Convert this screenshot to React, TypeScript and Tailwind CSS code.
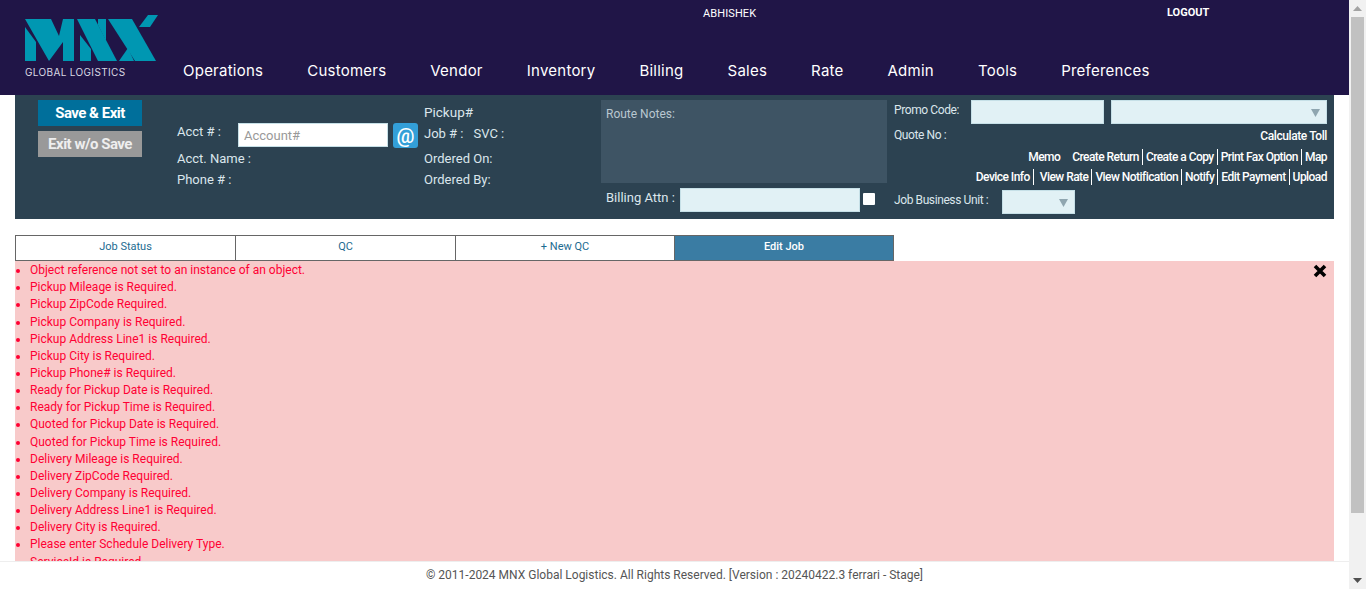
const navItems = ["Operations", "Customers", "Vendor", "Inventory", "Billing", "Sales", "Rate", "Admin", "Tools", "Preferences"]

const errors = [
  "Object reference not set to an instance of an object.",
  "Pickup Mileage is Required.",
  "Pickup ZipCode Required.",
  "Pickup Company is Required.",
  "Pickup Address Line1 is Required.",
  "Pickup City is Required.",
  "Pickup Phone# is Required.",
  "Ready for Pickup Date is Required.",
  "Ready for Pickup Time is Required.",
  "Quoted for Pickup Date is Required.",
  "Quoted for Pickup Time is Required.",
  "Delivery Mileage is Required.",
  "Delivery ZipCode Required.",
  "Delivery Company is Required.",
  "Delivery Address Line1 is Required.",
  "Delivery City is Required.",
  "Please enter Schedule Delivery Type.",
  "ServiceId is Required.",
]

const linksOne = ["Create Return", "Create a Copy", "Print Fax Option", "Map"]
const linksTwo = ["Device Info", "View Rate", "View Notification", "Notify", "Edit Payment", "Upload"]

function Logo() {
  return (
    <svg width="134" height="47" viewBox="0 0 134 47" className="block">
      {/* M */}
      <path fill="#0097b2" d="M0 4h26l8 17 4-17h11v42H38V27L24 46 0 4Z" />
      <path fill="#0097b2" d="M0 12l11 15v19H0V12Z" />
      {/* N */}
      <path fill="#0097b2" d="M55 20l11 14v12H55V20Z" />
      <path fill="#0097b2" d="M52 4h18l22 42H73L52 4Z" />
      <path fill="#0097b2" d="M73 4h8v22L73 10V4Z" />
      {/* X */}
      <path fill="#0097b2" d="M83 4h24l24 42h-21L83 4Z" />
      <path fill="#0097b2" d="M94 46l9-13 6 13H94Z" />
      <path fill="#0097b2" d="M114 12l9-12h10l-8 12h-11Z" />
    </svg>
  )
}

function SelectBox({ className }: { className: string }) {
  return (
    <div className={`flex items-center justify-end bg-[#e1f1f5] border border-[#c6e0e7] pr-[6px] ${className}`}>
      <svg width="9" height="9" viewBox="0 0 9 9">
        <path d="M0 1h9L4.5 9Z" fill="#8fa6b0" />
      </svg>
    </div>
  )
}

function LinkRow({ items }: { items: string[] }) {
  return (
    <>
      {items.map((item, i) => (
        <span key={item} className={i < items.length - 1 ? "border-r border-white pr-[3px] mr-[3px]" : ""}>
          {item}
        </span>
      ))}
    </>
  )
}

export default function App() {
  return (
    <div className="relative flex h-[589px] w-[1366px] overflow-hidden bg-white font-['Roboto',sans-serif]">
      <div className="w-[1349px] shrink-0">
        {/* Top bar */}
        <header className="flex h-[95px] bg-[#201547]">
          <div className="ml-[25px] w-[158px] pt-[15px]">
            <Logo />
            <div className="mt-[4px] text-[10px] leading-[12px] tracking-[0.35px] text-[#d9d8e2] font-['Inter',sans-serif]">GLOBAL LOGISTICS</div>
          </div>
          <div className="flex-1">
            <div className="flex h-[61px] pt-[6px] text-[11px] leading-[14px] text-white">
              <span className="ml-[520px] w-[464px] mt-[1px] tracking-[0.1px]">ABHISHEK</span>
              <span className="font-bold">LOGOUT</span>
            </div>
            <nav className="flex gap-[44px] text-[15px] leading-[20px] tracking-[0.24px] text-white font-['Inter',sans-serif]">
              {navItems.map((item) => (
                <span key={item}>{item}</span>
              ))}
            </nav>
          </div>
        </header>

        <main className="px-[15px]">
          {/* Job panel */}
          <section className="flex h-[124px] bg-[#2c4251] pl-[23px] pt-[5px] text-[#dbe6ec]">
            <div className="w-[139px] shrink-0">
              <button className="block h-[26px] w-[104px] bg-[#006f9b] text-[15px] font-bold tracking-[-0.5px] text-white">Save &amp; Exit</button>
              <button className="mt-[5px] block h-[26px] w-[104px] bg-[#999999] text-[15px] font-bold tracking-[-0.5px] text-[#eeeeee]">Exit w/o Save</button>
            </div>

            <div className="w-[247px] shrink-0 pt-[23px] text-[13px] leading-[20px]">
              <div className="flex">
                <span className="w-[61px] -mt-[1px]">Acct # :</span>
                <input placeholder="Account#" className="h-[24px] w-[150px] border border-[#c6e0e7] bg-white px-[5px] text-[13px] text-gray-700 placeholder:text-[#999] outline-none" />
                <span className="ml-[5px] flex h-[25px] w-[25px] items-center justify-center rounded-[3px] bg-[#339fd8] text-[20px] font-medium text-white">@</span>
              </div>
              <div className="mt-[1px]">Acct. Name :</div>
              <div className="mt-[1px]">Phone # :</div>
            </div>

            <div className="w-[177px] shrink-0 pt-[2px] text-[13px] leading-[20px]">
              <div className="text-[13.5px]">Pickup#</div>
              <div className="mt-[2px] flex gap-[10px]">
                <span>Job # :</span>
                <span>SVC :</span>
              </div>
              <div className="mt-[5px]">Ordered On:</div>
              <div className="mt-[1px]">Ordered By:</div>
            </div>

            <div className="w-[293px] shrink-0">
              <div className="h-[83px] w-[286px] bg-[#3e5464] px-[5px] pt-[6px] text-[12px] leading-[16px] text-[#b9c7d0]">Route Notes:</div>
              <div className="mt-[5px] flex items-center pl-[5px] text-[13px]">
                <span className="w-[74px] whitespace-nowrap -mt-[4px]">Billing Attn :</span>
                <div className="h-[24px] w-[180px] border border-[#c6e0e7] bg-[#e1f1f5]"></div>
                <input type="checkbox" className="ml-[3px] -mt-[2px] h-[12px] w-[12px] appearance-none rounded-[1px] bg-white" />
              </div>
            </div>

            <div className="w-[433px] shrink-0 text-[12px] tracking-[-0.4px] leading-[16px]">
              <div className="flex h-[24px] items-center">
                <span className="w-[77px] -mt-[4px]">Promo Code:</span>
                <div className="h-[24px] w-[133px] border border-[#c6e0e7] bg-[#e1f1f5]"></div>
                <SelectBox className="ml-[7px] h-[24px] w-[216px]" />
              </div>
              <div className="mt-[2px] flex h-[20px] items-start justify-between">
                <span className="mt-[1px]">Quote No :</span>
                <span className="mt-[2px] font-medium text-white">Calculate Toll</span>
              </div>
              <div className="mt-[3px] flex h-[16px] justify-end font-medium tracking-[-0.55px] text-white">
                <span className="mr-[12px]">Memo</span>
                <LinkRow items={linksOne} />
              </div>
              <div className="mt-[4px] flex h-[16px] justify-end font-medium tracking-[-0.55px] text-white">
                <span className="border-r border-white pr-[3px] mr-[6px]">{linksTwo[0]}</span>
                <LinkRow items={linksTwo.slice(1)} />
              </div>
              <div className="mt-[5px] flex h-[24px] items-center">
                <span className="w-[108px] -mt-[4px]">Job Business Unit :</span>
                <SelectBox className="h-[24px] w-[73px]" />
              </div>
            </div>
          </section>

          {/* Tabs */}
          <div className="mt-[16px] flex h-[26px] w-[879px] text-center text-[11px] leading-[22px] text-[#1c6b91]">
            <div className="w-[221px] border border-[#666666]">Job Status</div>
            <div className="w-[220px] border border-l-0 border-[#666666]">QC</div>
            <div className="w-[219px] border border-l-0 border-[#666666]">+ New QC</div>
            <div className="w-[219px] border border-l-0 border-[#666666] bg-[#3a7ca3] font-medium text-white">Edit Job</div>
          </div>

          {/* Error list */}
          <div className="relative h-[400px] bg-[#f8caca]">
            <ul className="list-disc pl-[15px] pt-[1.15px] text-[12px] leading-[17.143px] text-[#ff0033]">
              {errors.map((e) => (
                <li key={e}>{e}</li>
              ))}
            </ul>
            <svg width="14" height="14" viewBox="0 0 14 14" className="absolute right-[7px] top-[3px]">
              <path d="M2 2l10 10M12 2L2 12" stroke="#000" strokeWidth="3.6" />
            </svg>
          </div>
        </main>
      </div>

      {/* Scrollbar */}
      <div className="flex w-[17px] shrink-0 flex-col items-center bg-[#f1f1f1]">
        <svg width="9" height="17" viewBox="0 0 9 17">
          <path d="M4.5 6L9 11H0Z" fill="#a3a3a3" />
        </svg>
        <div className="h-[496px] w-[13px] bg-[#c1c1c1]"></div>
        <svg width="9" height="17" viewBox="0 0 9 17" className="mt-auto">
          <path d="M4.5 11L0 6H9Z" fill="#505050" />
        </svg>
      </div>

      {/* Sticky footer */}
      <footer className="absolute bottom-0 left-0 h-[28px] w-[1349px] border-t border-[#eeeeee] bg-white text-center text-[12px] leading-[27px] text-[#555555]">
        © 2011-2024 MNX Global Logistics. All Rights Reserved. [Version : 20240422.3 ferrari - Stage]
      </footer>
    </div>
  )
}
